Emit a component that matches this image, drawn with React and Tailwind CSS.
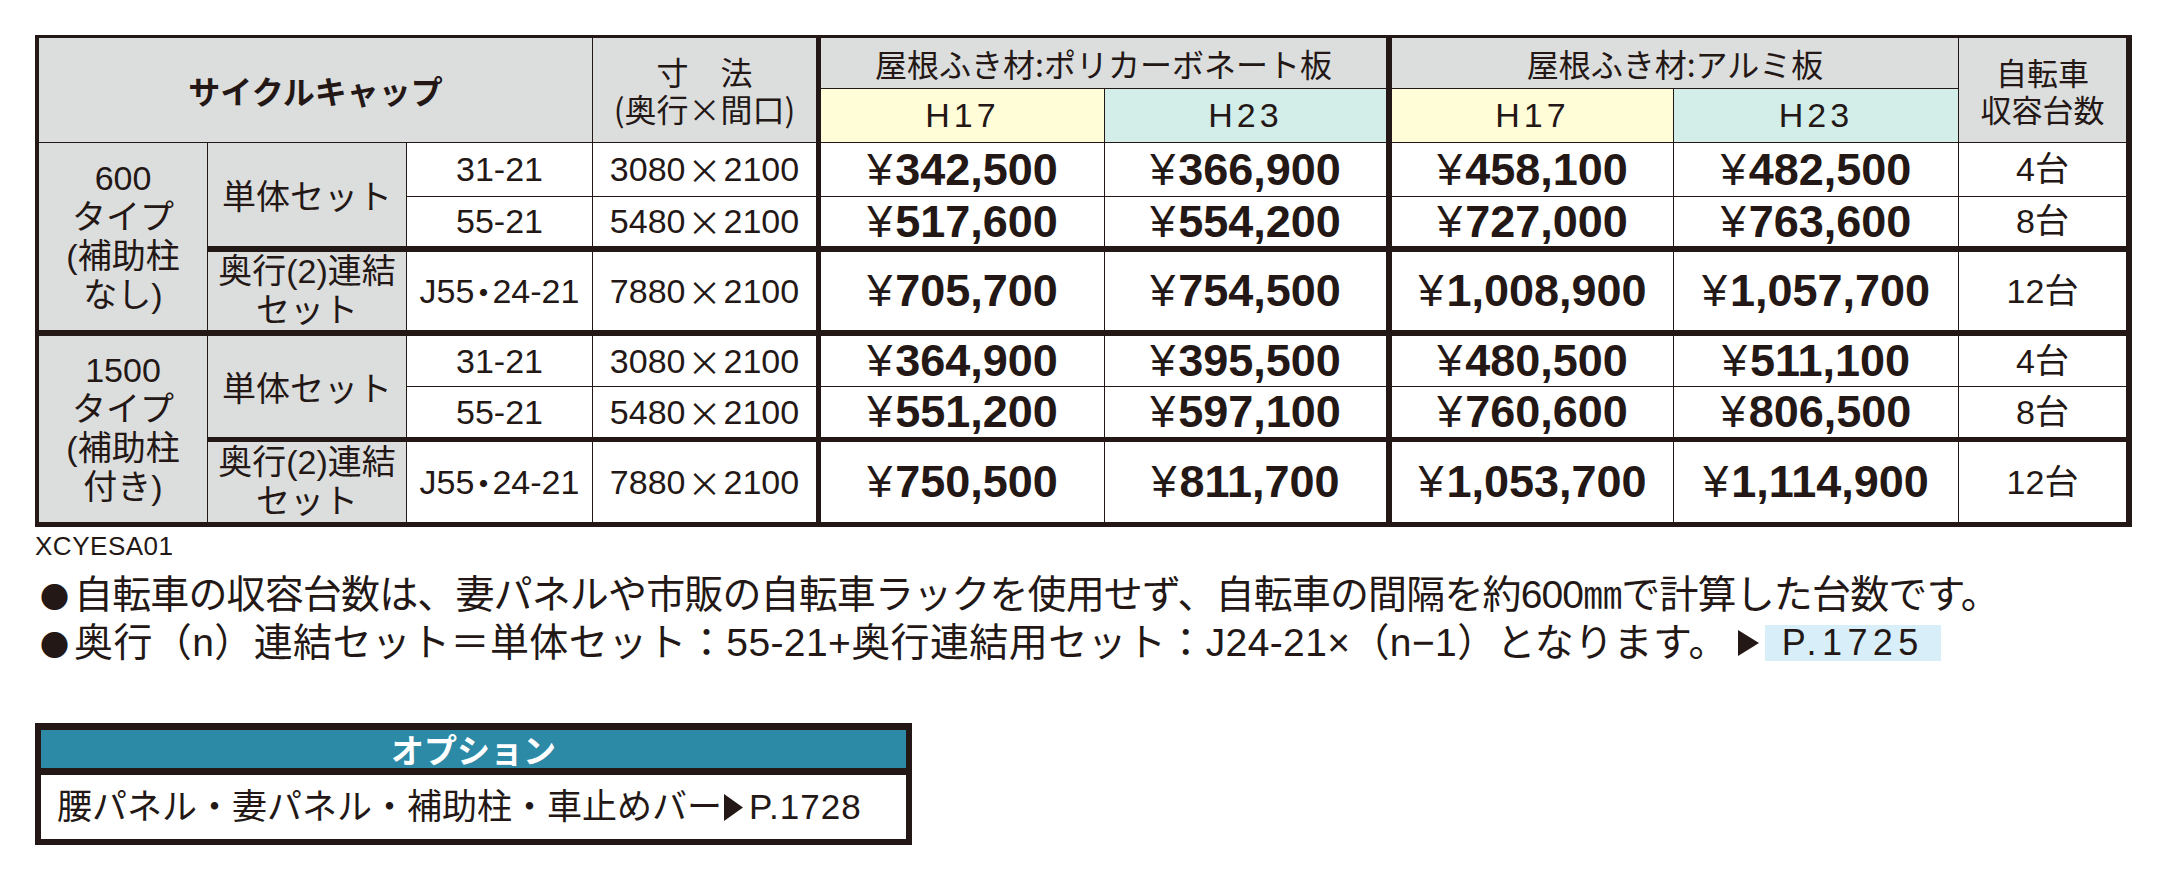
const latin = "font-['Liberation_Sans','Noto_Sans_CJK_JP',sans-serif]";
const jp = "font-['Noto_Sans_CJK_JP',sans-serif]";

const gray = 'bg-[#dcdddd]';

const groups = [
  {
    label: ['600', 'タイプ', '(補助柱', 'なし)'],
    labelPos: 'row-start-5 row-span-5',
    singlePos: 'row-start-5 row-span-3',
    joinPos: 'row-start-9',
    rowPos: ['row-start-5', 'row-start-7', 'row-start-9'],
    rows: [
      ['31-21', '3080', '342,500', '366,900', '458,100', '482,500', '4台'],
      ['55-21', '5480', '517,600', '554,200', '727,000', '763,600', '8台'],
      ['J55・24-21', '7880', '705,700', '754,500', '1,008,900', '1,057,700', '12台'],
    ],
  },
  {
    label: ['1500', 'タイプ', '(補助柱', '付き)'],
    labelPos: 'row-start-11 row-span-5',
    singlePos: 'row-start-11 row-span-3',
    joinPos: 'row-start-15',
    rowPos: ['row-start-11', 'row-start-13', 'row-start-15'],
    rows: [
      ['31-21', '3080', '364,900', '395,500', '480,500', '511,100', '4台'],
      ['55-21', '5480', '551,200', '597,100', '760,600', '806,500', '8台'],
      ['J55・24-21', '7880', '750,500', '811,700', '1,053,700', '1,114,900', '12台'],
    ],
  },
];

const priceCols = ['col-start-9', 'col-start-11', 'col-start-13', 'col-start-15'];

function Model({ text }) {
  if (!text.includes('・')) return <span>{text}</span>;
  const [a, b] = text.split('・');
  return (
    <span className="flex items-center">
      {a}
      <span className={`inline-flex justify-center w-[18px] ${jp}`}>・</span>
      {b}
    </span>
  );
}

function Arrow({ className }) {
  return (
    <svg viewBox="0 0 20 26" preserveAspectRatio="none" className={className}>
      <polygon points="0,0 20,13 0,26" fill="#231815" />
    </svg>
  );
}

function Bullet() {
  return <span className={`inline-flex w-[39px] justify-center ${jp} text-[29px]`}>●</span>;
}

export default function App() {
  return (
    <div className="w-[2168px] h-[870px] overflow-hidden bg-white pl-[35px] pt-[35px] text-[#231815]">
      {/* price table */}
      <div className="grid w-fit grid-cols-[168px_1px_198px_1px_185px_1px_223px_5px_283px_1px_281px_6px_281px_1px_284px_1px_167px] grid-rows-[50px_1px_53px_1px_53px_1px_49px_6px_78px_6px_50px_1px_50px_5px_80px] bg-[#231815] border-[#231815] border-t-[3px] border-l-4 border-r-[6px] border-b-[5px]">
        <div className={`col-start-1 col-span-5 row-start-1 row-span-3 ${gray} flex items-center justify-center ${jp} font-bold text-[32px] leading-none`}>
          サイクルキャップ
        </div>
        <div className={`col-start-7 row-start-1 row-span-3 ${gray} flex flex-col items-center justify-center ${jp} text-[32px] leading-[37px]`}>
          <span className="block">寸　法</span>
          <span className="block">(奥行×間口)</span>
        </div>
        <div className={`col-start-9 col-span-3 row-start-1 ${gray} flex items-center justify-center ${jp} text-[32px] leading-none`}>
          屋根ふき材:ポリカーボネート板
        </div>
        <div className={`col-start-13 col-span-3 row-start-1 ${gray} flex items-center justify-center ${jp} text-[32px] leading-none`}>
          屋根ふき材:アルミ板
        </div>
        <div className={`col-start-9 row-start-3 bg-[#fffcd8] flex items-center justify-center ${latin} text-[34px] tracking-[0.12em]`}>H17</div>
        <div className={`col-start-11 row-start-3 bg-[#d3eee9] flex items-center justify-center ${latin} text-[34px] tracking-[0.12em]`}>H23</div>
        <div className={`col-start-13 row-start-3 bg-[#fffcd8] flex items-center justify-center ${latin} text-[34px] tracking-[0.12em]`}>H17</div>
        <div className={`col-start-15 row-start-3 bg-[#d3eee9] flex items-center justify-center ${latin} text-[34px] tracking-[0.12em]`}>H23</div>
        <div className={`col-start-17 row-start-1 row-span-3 ${gray} flex flex-col items-center justify-center ${jp} text-[31px] leading-[37px]`}>
          <span className="block">自転車</span>
          <span className="block">収容台数</span>
        </div>

        {groups.map((g) => (
          <div key={g.label[0]} className="contents">
            <div className={`col-start-1 ${g.labelPos} ${gray} flex flex-col items-center justify-center ${latin} text-[34px] leading-[39px]`}>
              {g.label.map((l) => (
                <span key={l} className="block">{l}</span>
              ))}
            </div>
            <div className={`col-start-3 ${g.singlePos} ${gray} flex items-center justify-center ${jp} text-[34px] leading-none`}>
              単体セット
            </div>
            <div className={`col-start-3 ${g.joinPos} ${gray} flex flex-col items-center justify-center ${latin} text-[34px] leading-[39px]`}>
              <span className="block">奥行(2)連結</span>
              <span className="block">セット</span>
            </div>

            {g.rows.map((r, i) => (
              <div key={i} className="contents">
                <div className={`col-start-5 ${g.rowPos[i]} bg-white flex items-center justify-center ${latin} text-[34px]`}>
                  <Model text={r[0]} />
                </div>
                <div className={`col-start-7 ${g.rowPos[i]} bg-white flex items-center justify-center ${latin} text-[34px]`}>
                  {r[1]}
                  <span className={`inline-flex justify-center w-[38px] ${jp}`}>×</span>
                  2100
                </div>
                {r.slice(2, 6).map((p, j) => (
                  <div key={j} className={`${priceCols[j]} ${g.rowPos[i]} bg-white flex items-center justify-center ${latin} text-[45px] font-bold`}>
                    <span className="font-normal mr-[3px]">¥</span>
                    {p}
                  </div>
                ))}
                <div className={`col-start-17 ${g.rowPos[i]} bg-white flex items-center justify-center ${latin} text-[34px]`}>
                  {r[6]}
                </div>
              </div>
            ))}
          </div>
        ))}
      </div>

      {/* notes */}
      <p className={`mt-[7px] ${latin} text-[26px] leading-[24px] tracking-[0.02em]`}>XCYESA01</p>
      <p className={`mt-[13px] flex items-center whitespace-nowrap ${latin} text-[39px] leading-[48px]`}>
        <Bullet />
        <span className="tracking-[-0.022em]">
          自転車の収容台数は、妻パネルや市販の自転車ラックを使用せず、自転車の間隔を約600㎜で計算した台数です。
        </span>
      </p>
      <p className={`flex items-center whitespace-nowrap ${latin} text-[39px] leading-[48px]`}>
        <Bullet />
        <span className="tracking-[0.01em]">
          奥行（n）連結セット＝単体セット：55-21+奥行連結用セット：J24-21×（n−1）となります。
        </span>
        <Arrow className="ml-[10px] w-[21px] h-[26px]" />
        <span className="ml-[6px] inline-block bg-[#d8eef8] px-[17px] text-[36px] leading-[36px] tracking-[0.15em]">P.1725</span>
      </p>

      {/* options */}
      <div className="mt-[56px] w-[877px] border-[6px] border-t-[7px] border-[#231815]">
        <div className={`h-[45px] border-b-[7px] border-[#231815] bg-[#2d8aa7] flex items-center justify-center ${jp} font-bold text-[33px] text-white leading-none`}>
          オプション
        </div>
        <div className={`h-[64px] bg-white flex items-center pl-[16px] ${latin} text-[35px]`}>
          腰パネル・妻パネル・補助柱・車止めバー
          <Arrow className="w-[19px] h-[27px] ml-[2px]" />
          <span className="ml-[6px] tracking-[0.03em]">P.1728</span>
        </div>
      </div>
    </div>
  );
}
